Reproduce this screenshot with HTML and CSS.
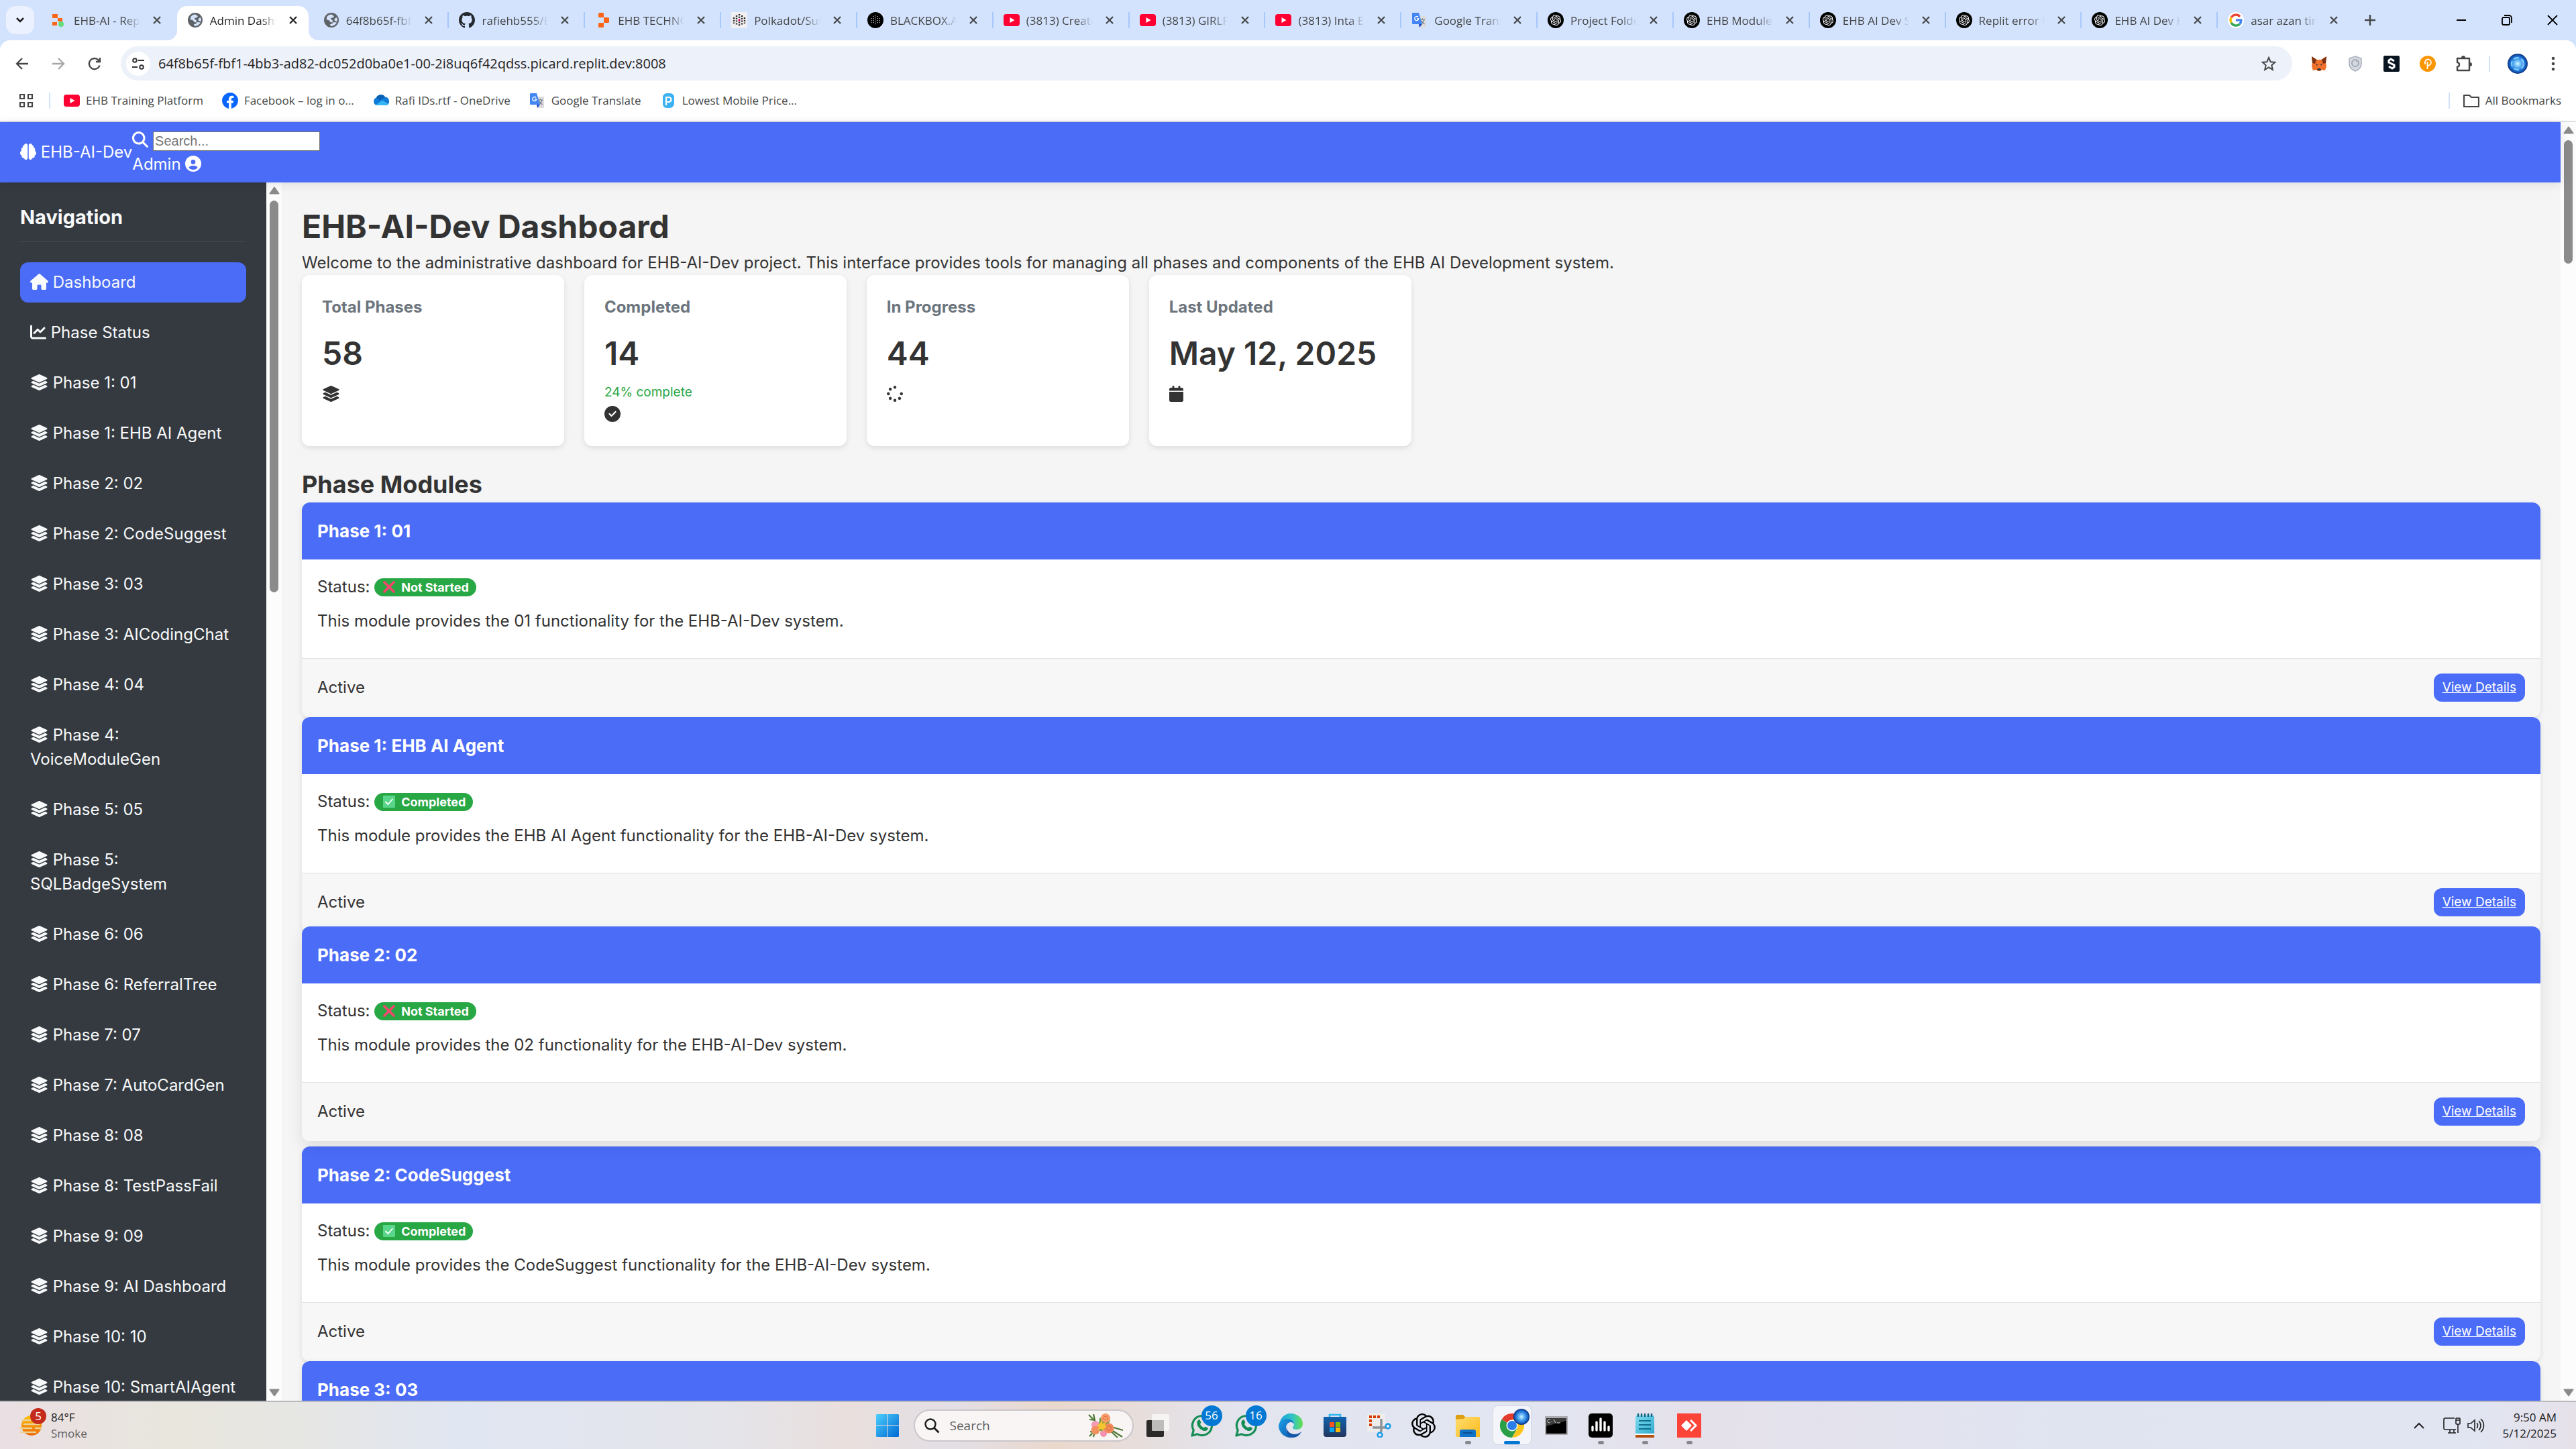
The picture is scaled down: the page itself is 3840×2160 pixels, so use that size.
FILE: index.html
```html
<!DOCTYPE html>
<html lang="en">
<head>
<meta charset="utf-8">
<title>Admin Dashboard - EHB-AI-Dev</title>
<link rel="stylesheet" href="styles.css">
</head>
<body>
<svg class="sprite" aria-hidden="true">
  <defs>
    <linearGradient id="g-win" x1="0" y1="0" x2="1" y2="1"><stop offset="0" stop-color="#4cd0fb"/><stop offset="1" stop-color="#0067d3"/></linearGradient>
    <linearGradient id="g-sun" x1="0" y1="0" x2="0" y2="1"><stop offset="0" stop-color="#fbc60a"/><stop offset="1" stop-color="#ee6203"/></linearGradient>
    <linearGradient id="g-edge" x1="0" y1="0" x2="1" y2="0"><stop offset="0" stop-color="#1a9fe0"/><stop offset=".6" stop-color="#35c6c0"/><stop offset="1" stop-color="#66e04a"/></linearGradient>
    <linearGradient id="g-edge2" x1="0" y1="0" x2="1" y2="1"><stop offset="0" stop-color="#1ba0e8"/><stop offset="1" stop-color="#0d55a8"/></linearGradient>
    <linearGradient id="g-store" x1="0" y1="0" x2="0" y2="1"><stop offset="0" stop-color="#0f62b0"/><stop offset="1" stop-color="#22355e"/></linearGradient>
    <linearGradient id="g-folder" x1="0" y1="0" x2="1" y2="1"><stop offset="0" stop-color="#ffdd70"/><stop offset="1" stop-color="#fbba1b"/></linearGradient>
    <linearGradient id="g-note" x1="0" y1="0" x2="1" y2="1"><stop offset="0" stop-color="#7fdcf0"/><stop offset="1" stop-color="#2fa9cc"/></linearGradient>
    <radialGradient id="g-orb"><stop offset="0" stop-color="#d8f8ff"/><stop offset=".35" stop-color="#5fb4f5"/><stop offset=".75" stop-color="#1a6bd0"/><stop offset="1" stop-color="#0a2f78"/></radialGradient>
  </defs>
  <symbol id="i-layers" viewBox="-32 0 576 512"><path d="M12.41 148.02l232.94 105.67c6.8 3.09 14.49 3.09 21.29 0l232.94-105.67c16.55-7.51 16.55-32.52 0-40.03L266.65 2.31a25.607 25.607 0 0 0-21.29 0L12.41 107.98c-16.55 7.51-16.55 32.53 0 40.04zm487.18 88.28l-58.09-26.33-161.64 73.27c-7.56 3.43-15.59 5.17-23.86 5.17s-16.29-1.74-23.86-5.17L70.51 209.97l-58.1 26.33c-16.55 7.5-16.55 32.5 0 40l232.94 105.59c6.8 3.08 14.49 3.08 21.29 0L499.59 276.3c16.55-7.5 16.55-32.5 0-40zm0 127.8l-57.87-26.23-161.86 73.37c-7.56 3.43-15.59 5.17-23.86 5.17s-16.29-1.74-23.86-5.17L70.29 337.87 12.41 364.1c-16.55 7.5-16.55 32.5 0 40l232.94 105.59c6.8 3.08 14.49 3.08 21.29 0L499.59 404.1c16.55-7.5 16.55-32.5 0-40z"/></symbol>
  <symbol id="i-house" viewBox="0 0 576 512"><path d="M575.8 255.5c0 18-15 32.1-32 32.1h-32l.7 160.2c0 2.7-.2 5.4-.5 8.1V472c0 22.1-17.9 40-40 40H456c-1.1 0-2.2 0-3.3-.1c-1.4 .1-2.8 .1-4.2 .1H416 392c-22.1 0-40-17.9-40-40V448 384c0-17.7-14.3-32-32-32H256c-17.7 0-32 14.3-32 32v64 24c0 22.1-17.9 40-40 40H160 128.1c-1.5 0-3-.1-4.5-.2c-1.2 .1-2.4 .2-3.6 .2H104c-22.1 0-40-17.9-40-40V360c0-.9 0-1.9 .1-2.8V287.6H32c-18 0-32-14-32-32.1c0-9 3-17 10-24L266.4 8c7-7 15-8 22-8s15 2 21 7L564.8 231.5c8 7 12 15 11 24z"/></symbol>
  <symbol id="i-chart" viewBox="0 0 512 512"><path d="M64 64c0-17.7-14.3-32-32-32S0 46.3 0 64V400c0 44.2 35.8 80 80 80H480c17.7 0 32-14.3 32-32s-14.3-32-32-32H80c-8.8 0-16-7.2-16-16V64zm406.6 86.6c12.5-12.5 12.5-32.8 0-45.3s-32.8-12.5-45.3 0L320 210.7l-57.4-57.4c-12.5-12.5-32.8-12.5-45.3 0l-112 112c-12.5 12.5-12.5 32.8 0 45.3s32.8 12.5 45.3 0L240 221.3l57.4 57.4c12.5 12.5 32.8 12.5 45.3 0l128-128z"/></symbol>
  <symbol id="i-search" viewBox="0 0 512 512"><path d="M416 208c0 45.9-14.9 88.3-40 122.7L502.6 457.4c12.5 12.5 12.5 32.8 0 45.3s-32.8 12.5-45.3 0L330.7 376c-34.4 25.2-76.8 40-122.7 40C93.1 416 0 322.9 0 208S93.1 0 208 0S416 93.1 416 208zM208 352a144 144 0 1 0 0-288 144 144 0 1 0 0 288z"/></symbol>
  <symbol id="i-user" viewBox="0 0 512 512"><path d="M399 384.2C376.9 345.8 335.4 320 288 320H224c-47.4 0-88.9 25.8-111 64.2c35.2 39.2 86.2 63.8 143 63.8s107.8-24.7 143-63.8zM0 256a256 256 0 1 1 512 0A256 256 0 1 1 0 256zm256 16a72 72 0 1 0 0-144 72 72 0 1 0 0 144z"/></symbol>
  <symbol id="i-brain" viewBox="0 0 512 512"><path d="M184 0c30.900 0 56 25.100 56 56V456c0 30.900-25.100 56-56 56c-28.900 0-52.700-21.900-55.700-50.100c-5.200 1.400-10.700 2.100-16.300 2.100c-35.300 0-64-28.700-64-64c0-7.400 1.300-14.600 3.600-21.200C21.400 367.400 0 338.200 0 304c0-31.900 18.700-59.500 45.800-72.300C37.100 220.800 32 207 32 192c0-30.700 21.600-56.300 50.400-62.600C80.800 123.900 80 118 80 112c0-29.900 20.600-55.100 48.300-62.100C131.300 21.900 155.100 0 184 0zM328 0c28.900 0 52.600 21.900 55.700 49.900C411.500 56.900 432 82 432 112c0 6-.8 11.900-2.400 17.400C458.400 135.700 480 161.200 480 192c0 15-5.100 28.800-13.800 39.700C493.300 244.500 512 272.100 512 304c0 34.200-21.400 63.400-51.600 74.800C462.700 385.400 464 392.600 464 400c0 35.300-28.700 64-64 64c-5.600 0-11.100-.7-16.300-2.100C380.700 490.100 356.900 512 328 512c-30.900 0-56-25.100-56-56V56c0-30.900 25.100-56 56-56z"/></symbol>
  <symbol id="i-check" viewBox="0 0 512 512"><path d="M256 512A256 256 0 1 0 256 0a256 256 0 1 0 0 512zM369 209L241 337c-9.400 9.400-24.600 9.400-33.900 0l-64-64c-9.400-9.400-9.400-24.600 0-33.900s24.600-9.400 33.900 0l47 47L335 175c9.400-9.400 24.600-9.400 33.900 0s9.400 24.600 0 33.900z"/></symbol>
  <symbol id="i-spinner" viewBox="0 0 512 512"><path d="M304 48a48 48 0 1 0 -96 0 48 48 0 1 0 96 0zm0 416a48 48 0 1 0 -96 0 48 48 0 1 0 96 0zM48 304a48 48 0 1 0 0-96 48 48 0 1 0 0 96zm464-48a48 48 0 1 0 -96 0 48 48 0 1 0 96 0zM142.900 437A48 48 0 1 0 75 369.100 48 48 0 1 0 142.900 437zm0-294.200A48 48 0 1 0 75 75a48 48 0 1 0 67.900 67.900zM369.100 437A48 48 0 1 0 437 369.100 48 48 0 1 0 369.100 437z"/></symbol>
  <symbol id="i-calendar" viewBox="0 0 448 512"><path d="M96 32V64H48C21.500 64 0 85.500 0 112v48H448V112c0-26.500-21.500-48-48-48H352V32c0-17.700-14.300-32-32-32s-32 14.300-32 32V64H160V32c0-17.700-14.300-32-32-32S96 14.300 96 32zM448 192H0V464c0 26.500 21.500 48 48 48H400c26.500 0 48-21.500 48-48V192z"/></symbol>
  <symbol id="i-cross" viewBox="0 0 18 18"><path d="M2 2l14 14M16 2L2 16" stroke="#f8466f" stroke-width="3.600" stroke-linecap="round"/></symbol>
  <symbol id="i-tick" viewBox="0 0 18 18"><rect width="18" height="18" rx="1" fill="#5ad68b"/><path d="M4 9.500l3.500 3.500L14 5.500" fill="none" stroke="#fff" stroke-width="1.800" stroke-linecap="round"/></symbol>
  <symbol id="i-close" viewBox="0 0 14 14"><path d="M2 2l10 10M12 2L2 12" stroke="currentColor" stroke-width="2.200"/></symbol>
  <symbol id="i-globe" viewBox="0 0 24 24"><circle cx="12" cy="12" r="11" fill="#5f6368"/><path d="M12 3.500c-3 0-5 1.500-6.500 3.500l-1 4 4.500 1.500 1.500 2.500 3 .5.500-3-3-2 .5-2h3l1.500-2.500zM20 8l-3 1.500-.5 3 3 1.500 1.300-.5c.3-2 0-4-.8-5.500zM11 21c4 0 7.500-2.500 9-5.500l-5-.5-2 2.500-3 .5z" fill="#d4e2fc"/></symbol>
  <symbol id="i-replit" viewBox="0 0 24 24"><path d="M5 2.500a1.500 1.500 0 0 1 1.500-1.500h5A1.500 1.500 0 0 1 13 2.500V8H6.500A1.500 1.500 0 0 1 5 6.500zM13 8h6.500A1.500 1.500 0 0 1 21 9.500v5a1.500 1.500 0 0 1-1.500 1.500H13zM5 17.500A1.500 1.500 0 0 1 6.500 16H13v5.500a1.500 1.500 0 0 1-1.500 1.500h-5A1.500 1.500 0 0 1 5 21.500z" fill="#fb6515"/></symbol>
  <symbol id="i-replit-on" viewBox="0 0 24 24"><path d="M2 3h8v6H2zM10 9h7v5h-7zM2 15h7v5H2z" fill="#fb6515"/><circle cx="15" cy="18" r="4" fill="#62dc7c"/></symbol>
  <symbol id="i-github" viewBox="0 0 16 16"><path fill="#24292f" d="M8 0C3.580 0 0 3.580 0 8c0 3.540 2.290 6.530 5.470 7.590.4.070.55-.17.55-.38 0-.19-.01-.82-.01-1.490-2.010.37-2.530-.49-2.690-.94-.09-.23-.48-.94-.82-1.130-.28-.15-.68-.52-.01-.53.63-.01 1.080.58 1.230.82.72 1.210 1.870.87 2.330.66.07-.52.28-.87.51-1.070-1.780-.2-3.640-.89-3.640-3.950 0-.87.31-1.590.82-2.150-.08-.2-.36-1.020.08-2.120 0 0 .67-.21 2.200.82.64-.18 1.320-.27 2-.27s1.360.09 2 .27c1.530-1.040 2.200-.82 2.200-.82.44 1.100.16 1.920.08 2.120.51.56.82 1.270.82 2.150 0 3.070-1.870 3.750-3.650 3.950.29.25.54.73.54 1.480 0 1.070-.01 1.930-.01 2.200 0 .21.15.46.55.38A8.010 8.010 0 0 0 16 8c0-4.420-3.580-8-8-8z"/></symbol>
  <symbol id="i-polka" viewBox="0 0 24 24"><rect width="24" height="24" fill="#f1efef"/><path d="M12 3v18M8 5v15M16 5v15M4 8v9M20 8v9" stroke="#222" stroke-width="2.400" stroke-dasharray="2 1.800"/><circle cx="12" cy="12" r="1.500" fill="#e6007a"/></symbol>
  <symbol id="i-blackbox" viewBox="0 0 24 24"><circle cx="12" cy="12" r="12"/><path d="M12 5v14M9 6v12M15 6v12M6 9v7M18 9v7" stroke="#bbb" stroke-width="1.300" stroke-dasharray="1.300 1.700"/></symbol>
  <symbol id="i-youtube" viewBox="0 0 24 24"><rect y="3" width="24" height="18" rx="4" fill="#ff0033"/><path d="M9.500 8l7 4-7 4z" fill="#fff"/></symbol>
  <symbol id="i-translate" viewBox="0 0 24 24"><path d="M9 6h12a1 1 0 0 1 1 1v15a1 1 0 0 1-1 1h-8z" fill="#dcdcdc"/><path d="M13 11h7M16.500 9.500V11M19 11c0 3-3 6-5 7M15 13c1 2 3 4 4.500 5" stroke="#6b7785" stroke-width="1.200" fill="none"/><path d="M2 1h9l5 17H2a1 1 0 0 1-1-1V2a1 1 0 0 1 1-1z" fill="#4285f4"/><path d="M11 18h5l-4 5z" fill="#2146c4"/><path d="M10 7.500a3 3 0 1 0 .8 2.500H8" stroke="#fff" stroke-width="1.400" fill="none"/></symbol>
  <symbol id="i-knot" viewBox="0 0 24 24"><path d="M22.282 9.821a5.985 5.985 0 0 0-.516-4.911 6.046 6.046 0 0 0-6.510-2.900A6.065 6.065 0 0 0 4.981 4.182a5.985 5.985 0 0 0-3.998 2.900 6.046 6.046 0 0 0 .743 7.097 5.980 5.980 0 0 0 .511 4.911 6.051 6.051 0 0 0 6.515 2.900A5.985 5.985 0 0 0 13.260 24a6.056 6.056 0 0 0 5.772-4.206 5.989 5.989 0 0 0 3.998-2.900 6.056 6.056 0 0 0-.748-7.073zm-9.022 12.608a4.476 4.476 0 0 1-2.876-1.041l.142-.080 4.778-2.758a.795.795 0 0 0 .393-.681v-6.737l2.020 1.169a.071.071 0 0 1 .038.062v5.583a4.504 4.504 0 0 1-4.495 4.485zm-9.661-4.125a4.471 4.471 0 0 1-.535-3.014l.142.085 4.783 2.758a.771.771 0 0 0 .781 0l5.843-3.369v2.332a.080.080 0 0 1-.033.062L9.740 19.950a4.499 4.499 0 0 1-6.141-1.646zM2.341 7.896a4.485 4.485 0 0 1 2.366-1.973V11.600a.766.766 0 0 0 .388.677l5.814 3.354-2.020 1.169a.076.076 0 0 1-.071 0l-4.830-2.787A4.504 4.504 0 0 1 2.341 7.872zm16.596 3.856L13.104 8.364 15.119 7.200a.076.076 0 0 1 .071 0l4.830 2.791a4.494 4.494 0 0 1-.677 8.104v-5.677a.790.790 0 0 0-.407-.667zm2.011-3.023l-.142-.085-4.774-2.782a.776.776 0 0 0-.785 0L9.409 9.230V6.897a.066.066 0 0 1 .028-.062l4.830-2.787a4.499 4.499 0 0 1 6.680 4.660zM8.307 12.863l-2.020-1.164a.080.080 0 0 1-.038-.057V6.074a4.499 4.499 0 0 1 7.376-3.454l-.142.081L8.704 5.459a.795.795 0 0 0-.393.681zm1.097-2.365l2.602-1.500 2.607 1.500v2.999l-2.597 1.500-2.607-1.500z"/></symbol>
  <symbol id="i-gpt" viewBox="0 0 24 24"><circle cx="12" cy="12" r="12"/><use href="#i-knot" x="4" y="4" width="16" height="16" fill="#fff"/></symbol>
  <symbol id="i-google" viewBox="0 0 24 24"><circle cx="12" cy="12" r="12" fill="#fff"/><path d="M18 6.800A8 8 0 0 0 5 8.200" fill="none" stroke="#ea4335" stroke-width="3.400"/><path d="M5 8.200a8 8 0 0 0 0 7.600" fill="none" stroke="#fbbc05" stroke-width="3.400"/><path d="M5 15.800a8 8 0 0 0 12.500 2.200" fill="none" stroke="#34a853" stroke-width="3.400"/><path d="M17.500 18a8 8 0 0 0 2.300-6H12" fill="none" stroke="#4285f4" stroke-width="3.400"/></symbol>
  <symbol id="i-facebook" viewBox="0 0 24 24"><path fill="#0866ff" d="M24 12a12 12 0 1 0-13.900 11.900v-8.400H7.100V12h3V9.400c0-3 1.800-4.700 4.500-4.700 1.300 0 2.700.2 2.700.2v3h-1.500c-1.500 0-2 .9-2 1.900V12h3.300l-.5 3.500h-2.800v8.400A12 12 0 0 0 24 12z"/></symbol>
  <symbol id="i-onedrive" viewBox="0 0 24 24"><path d="M6 19a6 6 0 0 1-1-11.500 7.500 7.500 0 0 1 13-1A6.500 6.500 0 0 1 20 19z" fill="#0f7ad8"/><path d="M5 7.500a7.500 7.500 0 0 1 13-1l-8 5z" fill="#0a5fb4"/><path d="M4 18.500l10-7 9 5.500c-1 1.500-2 2-4 2H7c-1.300 0-2.200-.1-3-.5z" fill="#38b6f4"/></symbol>
  <symbol id="i-price" viewBox="0 0 24 24"><path d="M10 1h5a6 6 0 0 1 6 6v9a7 7 0 0 1-7 7h-4a6 6 0 0 1-6-6V7a6 6 0 0 1 6-6z" fill="#3cb2f2"/><path d="M9 19V7h4a3.500 3.500 0 0 1 0 7H9" fill="none" stroke="#fff" stroke-width="2.200"/></symbol>
  <symbol id="i-whatsapp" viewBox="0 0 36 36"><path d="M3 33l2.200-8A14.500 14.500 0 1 1 11 30.800z" fill="none" stroke="#178d56" stroke-width="3.200" stroke-linejoin="round"/><path d="M12 10c1-1 2.500-1 3 .3l1.300 3c.3.900-1.300 2-1.200 2.700 1 2.300 3 4.200 5.300 5 .8.200 1.700-1.700 2.700-1.300l3 1.500c1 .5.800 2 0 3-1.600 1.900-4.200 2.200-7 1.200-4-1.500-7-4.700-8.300-8.400-.9-2.800-.5-5.300 1.200-7z" fill="#178d56"/></symbol>
  <symbol id="i-up" viewBox="0 0 16 12"><path d="M8 1.500L14.500 10.500h-13z" fill="#8b8b8b" stroke="#8b8b8b" stroke-width="2" stroke-linejoin="round"/></symbol>
</svg>

<header class="browser">
  <div class="tabstrip">
    <button class="tab-search" aria-label="Search tabs"><svg width="14" height="10" viewBox="0 0 14 10"><path d="M2 2l5 5 5-5" fill="none" stroke="#1f1f1f" stroke-width="2.500"/></svg></button>
    <nav class="tabs" aria-label="Open tabs">
      <div class="tab plain"><svg class="fav"><use href="#i-replit-on"/></svg><span class="tab-title">EHB-AI - Replit</span><button class="x" aria-label="Close"><svg><use href="#i-close"/></svg></button></div>
      <div class="tab active"><svg class="fav"><use href="#i-globe"/></svg><span class="tab-title">Admin Dashboard</span><button class="x" aria-label="Close"><svg><use href="#i-close"/></svg></button></div>
      <div class="tab plain"><svg class="fav"><use href="#i-globe"/></svg><span class="tab-title">64f8b65f-fbf1-4bb3</span><button class="x" aria-label="Close"><svg><use href="#i-close"/></svg></button></div>
      <div class="tab"><svg class="fav"><use href="#i-github"/></svg><span class="tab-title">rafiehb555/EHB</span><button class="x" aria-label="Close"><svg><use href="#i-close"/></svg></button></div>
      <div class="tab"><svg class="fav"><use href="#i-replit"/></svg><span class="tab-title">EHB TECHNOLOGIES</span><button class="x" aria-label="Close"><svg><use href="#i-close"/></svg></button></div>
      <div class="tab"><svg class="fav"><use href="#i-polka"/></svg><span class="tab-title">Polkadot/Substrate</span><button class="x" aria-label="Close"><svg><use href="#i-close"/></svg></button></div>
      <div class="tab"><svg class="fav"><use href="#i-blackbox"/></svg><span class="tab-title">BLACKBOX.AI</span><button class="x" aria-label="Close"><svg><use href="#i-close"/></svg></button></div>
      <div class="tab"><svg class="fav"><use href="#i-youtube"/></svg><span class="tab-title">(3813) Create</span><button class="x" aria-label="Close"><svg><use href="#i-close"/></svg></button></div>
      <div class="tab"><svg class="fav"><use href="#i-youtube"/></svg><span class="tab-title">(3813) GIRLFR</span><button class="x" aria-label="Close"><svg><use href="#i-close"/></svg></button></div>
      <div class="tab"><svg class="fav"><use href="#i-youtube"/></svg><span class="tab-title">(3813) Inta Ek</span><button class="x" aria-label="Close"><svg><use href="#i-close"/></svg></button></div>
      <div class="tab"><svg class="fav"><use href="#i-translate"/></svg><span class="tab-title">Google Translate</span><button class="x" aria-label="Close"><svg><use href="#i-close"/></svg></button></div>
      <div class="tab"><svg class="fav"><use href="#i-gpt"/></svg><span class="tab-title">Project Folder</span><button class="x" aria-label="Close"><svg><use href="#i-close"/></svg></button></div>
      <div class="tab"><svg class="fav"><use href="#i-gpt"/></svg><span class="tab-title">EHB Modules</span><button class="x" aria-label="Close"><svg><use href="#i-close"/></svg></button></div>
      <div class="tab"><svg class="fav"><use href="#i-gpt"/></svg><span class="tab-title">EHB AI Dev S</span><button class="x" aria-label="Close"><svg><use href="#i-close"/></svg></button></div>
      <div class="tab"><svg class="fav"><use href="#i-gpt"/></svg><span class="tab-title">Replit error f</span><button class="x" aria-label="Close"><svg><use href="#i-close"/></svg></button></div>
      <div class="tab"><svg class="fav"><use href="#i-gpt"/></svg><span class="tab-title">EHB AI Dev H</span><button class="x" aria-label="Close"><svg><use href="#i-close"/></svg></button></div>
      <div class="tab"><svg class="fav"><use href="#i-google"/></svg><span class="tab-title">asar azan time</span><button class="x" aria-label="Close"><svg><use href="#i-close"/></svg></button></div>
    </nav>
    <button class="new-tab" aria-label="New tab"><svg width="18" height="18" viewBox="0 0 18 18"><path d="M9 1v16M1 9h16" stroke="#444746" stroke-width="2.400"/></svg></button>
    <div class="window-controls">
      <button aria-label="Minimize"><svg width="16" height="16" viewBox="0 0 16 16"><path d="M1 8h14" stroke="#000" stroke-width="2"/></svg></button>
      <button aria-label="Restore"><svg width="16" height="16" viewBox="0 0 16 16"><rect x="1" y="4" width="11" height="11" rx="2" fill="none" stroke="#000" stroke-width="1.800"/><path d="M4 1h7a4 4 0 0 1 4 4v7" fill="none" stroke="#000" stroke-width="1.800"/></svg></button>
      <button aria-label="Close window"><svg width="16" height="16" viewBox="0 0 16 16"><path d="M1 1l14 14M15 1L1 15" stroke="#000" stroke-width="1.800"/></svg></button>
    </div>
  </div>
  <div class="toolbar">
    <button class="tool" aria-label="Back"><svg width="20" height="20" viewBox="0 0 20 20"><path d="M19 10H2M10 2l-8 8 8 8" fill="none" stroke="#444746" stroke-width="2.300"/></svg></button>
    <button class="tool" aria-label="Forward"><svg width="20" height="20" viewBox="0 0 20 20"><path d="M1 10h17M10 2l8 8-8 8" fill="none" stroke="#a5a7a8" stroke-width="2.300"/></svg></button>
    <button class="tool" aria-label="Reload"><svg width="20" height="20" viewBox="0 0 20 20"><path d="M17.500 12.500A8 8 0 1 1 16.500 5.500M18 1v6h-6" fill="none" stroke="#444746" stroke-width="2.300"/></svg></button>
    <div class="omnibox">
      <span class="site-info"><svg width="20" height="20" viewBox="0 0 20 20" fill="none" stroke="#303236" stroke-width="2"><circle cx="5" cy="5" r="2.800"/><path d="M10 5h9M1 15h8"/><circle cx="15" cy="15" r="2.800"/></svg></span>
      <input class="url" type="text" aria-label="Address" value="64f8b65f-fbf1-4bb3-ad82-dc052d0ba0e1-00-2i8uq6f42qdss.picard.replit.dev:8008">
      <button class="icon-btn" aria-label="Bookmark this tab"><svg width="24" height="24" viewBox="0 0 24 24"><path d="M12 3l2.700 6.200 6.600.6-5 4.500 1.500 6.600L12 17.400l-5.800 3.500 1.500-6.600-5-4.500 6.600-.6z" fill="none" stroke="#444746" stroke-width="2"/></svg></button>
    </div>
    <div class="extensions">
      <button class="icon-btn" aria-label="Wallet"><svg width="24" height="24" viewBox="0 0 24 24"><path d="M1 1l8 5h6l8-5-1 9 1 6-2 6-5-1-2 2h-4l-2-2-5 1-2-6 1-6z" fill="#f0702c"/><path d="M1 1l7 5-2 6-4-1zM23 1l-7 5 2 6 4-1z" fill="#7a3115"/><path d="M7 12l3 1-1 2zM17 12l-3 1 1 2zM10 19h4l1 2-2 1h-2l-2-1z" fill="#23344a"/></svg></button>
      <button class="icon-btn" aria-label="Shield"><svg width="24" height="24" viewBox="0 0 24 24"><path d="M12 1l9 3v8c0 5-4 9-9 11-5-2-9-6-9-11V4z" fill="#d5d9e0" stroke="#aab1bd" stroke-width="1.500"/><circle cx="12" cy="11" r="5" fill="none" stroke="#a2aab8" stroke-width="2"/><path d="M13 9l3-2" stroke="#a2aab8" stroke-width="2"/></svg></button>
      <button class="icon-btn" aria-label="S extension"><svg width="24" height="24" viewBox="0 0 24 24"><rect width="24" height="24" rx="2" fill="#081520"/><path d="M16 8l-5-3-3 2v3l8 4v3l-3 2-5-3" fill="none" stroke="#fff" stroke-width="3"/></svg></button>
      <button class="icon-btn" aria-label="P extension"><svg width="24" height="24" viewBox="0 0 24 24"><circle cx="12" cy="12" r="12" fill="#fb9500"/><path d="M8 13V9a4.500 4.500 0 1 1 4 5.500M11.500 9v11" fill="none" stroke="#fff" stroke-width="1.800"/></svg></button>
      <button class="icon-btn" aria-label="Extensions"><svg width="24" height="24" viewBox="0 0 24 24"><path d="M2 4h18v18H2v-5.500c4 0 4-6.500 0-6.500z" fill="none" stroke="#444746" stroke-width="2.400" stroke-linejoin="round"/><path d="M8 3a3 3 0 0 1 6 0zM21 10a3 3 0 0 1 0 6z" fill="#444746"/></svg></button>
    </div>
    <span class="divider"></span>
    <button class="icon-btn profile" aria-label="Profile"><svg width="30" height="30" viewBox="0 0 30 30"><circle cx="15" cy="15" r="15" fill="url(#g-orb)"/><circle cx="15" cy="15" r="9" fill="none" stroke="#7fd0ff" stroke-width="2" stroke-dasharray="8 4"/></svg></button>
    <button class="icon-btn" aria-label="Menu"><svg width="24" height="24" viewBox="0 0 24 24" fill="#444746"><circle cx="12" cy="4" r="2.300"/><circle cx="12" cy="12" r="2.300"/><circle cx="12" cy="20" r="2.300"/></svg></button>
  </div>
  <nav class="bookmarks" aria-label="Bookmarks">
    <button class="icon-btn apps" aria-label="Apps"><svg width="22" height="22" viewBox="0 0 22 22" fill="none" stroke="#444746" stroke-width="2.200"><path d="M2 2h6v6H2zM14 2h6v6h-6zM2 14h6v6H2zM14 14h6v6h-6z"/></svg></button>
    <span class="divider"></span>
    <a href="#"><svg><use href="#i-youtube"/></svg>EHB Training Platform</a>
    <a href="#"><svg><use href="#i-facebook"/></svg>Facebook – log in o...</a>
    <a href="#"><svg><use href="#i-onedrive"/></svg>Rafi IDs.rtf - OneDrive</a>
    <a href="#"><svg><use href="#i-translate"/></svg>Google Translate</a>
    <a href="#"><svg><use href="#i-price"/></svg>Lowest Mobile Price...</a>
    <span class="spacer"></span>
    <span class="divider"></span>
    <a href="#"><svg viewBox="0 0 24 24"><path d="M1 4h8l3 3h11v14H1z" fill="none" stroke="#444746" stroke-width="2.200" stroke-linejoin="round"/></svg>All Bookmarks</a>
  </nav>
</header>

<div class="viewport">
  <div class="page">
    <header class="app-header">
      <a class="brand" href="#"><svg class="fa"><use href="#i-brain"/></svg> EHB-AI-Dev</a>
      <div class="header-tools">
        <div><label for="q"><svg class="fa"><use href="#i-search"/></svg></label> <input id="q" class="search" type="text" placeholder="Search..."></div>
        <div>Admin <svg class="fa"><use href="#i-user"/></svg></div>
      </div>
    </header>
    <div class="app-body">
      <aside class="sidebar">
        <h3>Navigation</h3>
        <ul>
          <li><a class="current" href="#"><svg class="fa wide"><use href="#i-house"/></svg> Dashboard</a></li>
          <li><a href="#"><svg class="fa"><use href="#i-chart"/></svg> Phase Status</a></li>
          <li><a href="#"><svg class="fa wide"><use href="#i-layers"/></svg> Phase 1: 01</a></li>
          <li><a href="#"><svg class="fa wide"><use href="#i-layers"/></svg> Phase 1: EHB AI Agent</a></li>
          <li><a href="#"><svg class="fa wide"><use href="#i-layers"/></svg> Phase 2: 02</a></li>
          <li><a href="#"><svg class="fa wide"><use href="#i-layers"/></svg> Phase 2: CodeSuggest</a></li>
          <li><a href="#"><svg class="fa wide"><use href="#i-layers"/></svg> Phase 3: 03</a></li>
          <li><a href="#"><svg class="fa wide"><use href="#i-layers"/></svg> Phase 3: AICodingChat</a></li>
          <li><a href="#"><svg class="fa wide"><use href="#i-layers"/></svg> Phase 4: 04</a></li>
          <li><a href="#"><svg class="fa wide"><use href="#i-layers"/></svg> Phase 4: VoiceModuleGen</a></li>
          <li><a href="#"><svg class="fa wide"><use href="#i-layers"/></svg> Phase 5: 05</a></li>
          <li><a href="#"><svg class="fa wide"><use href="#i-layers"/></svg> Phase 5: SQLBadgeSystem</a></li>
          <li><a href="#"><svg class="fa wide"><use href="#i-layers"/></svg> Phase 6: 06</a></li>
          <li><a href="#"><svg class="fa wide"><use href="#i-layers"/></svg> Phase 6: ReferralTree</a></li>
          <li><a href="#"><svg class="fa wide"><use href="#i-layers"/></svg> Phase 7: 07</a></li>
          <li><a href="#"><svg class="fa wide"><use href="#i-layers"/></svg> Phase 7: AutoCardGen</a></li>
          <li><a href="#"><svg class="fa wide"><use href="#i-layers"/></svg> Phase 8: 08</a></li>
          <li><a href="#"><svg class="fa wide"><use href="#i-layers"/></svg> Phase 8: TestPassFail</a></li>
          <li><a href="#"><svg class="fa wide"><use href="#i-layers"/></svg> Phase 9: 09</a></li>
          <li><a href="#"><svg class="fa wide"><use href="#i-layers"/></svg> Phase 9: AI Dashboard</a></li>
          <li><a href="#"><svg class="fa wide"><use href="#i-layers"/></svg> Phase 10: 10</a></li>
          <li><a href="#"><svg class="fa wide"><use href="#i-layers"/></svg> Phase 10: SmartAIAgent</a></li>
        </ul>
      </aside>
      <div class="scrollbar"><svg><use href="#i-up"/></svg><div class="track"><div class="thumb side"></div></div><svg class="down"><use href="#i-up"/></svg></div>
      <main class="content">
        <h1>EHB-AI-Dev Dashboard</h1>
        <p>Welcome to the administrative dashboard for EHB-AI-Dev project. This interface provides tools for managing all phases and components of the EHB AI Development system.</p>
        <section class="stats">
          <article class="stat"><h3>Total Phases</h3><div class="value">58</div><svg class="fa wide"><use href="#i-layers"/></svg></article>
          <article class="stat"><h3>Completed</h3><div class="value">14</div><div class="trend">24% complete</div><svg class="fa"><use href="#i-check"/></svg></article>
          <article class="stat"><h3>In Progress</h3><div class="value">44</div><svg class="fa"><use href="#i-spinner"/></svg></article>
          <article class="stat"><h3>Last Updated</h3><div class="value">May 12, 2025</div><svg class="fa narrow"><use href="#i-calendar"/></svg></article>
        </section>
        <h2>Phase Modules</h2>
        <section class="modules">
          <article class="module">
            <h3>Phase 1: 01</h3>
            <div class="module-body"><p>Status: <span class="badge"><svg><use href="#i-cross"/></svg>Not Started</span></p><p>This module provides the 01 functionality for the EHB-AI-Dev system.</p></div>
            <footer><span>Active</span><a class="btn" href="#">View Details</a></footer>
          </article>
          <article class="module">
            <h3>Phase 1: EHB AI Agent</h3>
            <div class="module-body"><p>Status: <span class="badge"><svg><use href="#i-tick"/></svg>Completed</span></p><p>This module provides the EHB AI Agent functionality for the EHB-AI-Dev system.</p></div>
            <footer><span>Active</span><a class="btn" href="#">View Details</a></footer>
          </article>
          <article class="module raised">
            <h3>Phase 2: 02</h3>
            <div class="module-body"><p>Status: <span class="badge"><svg><use href="#i-cross"/></svg>Not Started</span></p><p>This module provides the 02 functionality for the EHB-AI-Dev system.</p></div>
            <footer><span>Active</span><a class="btn" href="#">View Details</a></footer>
          </article>
          <article class="module">
            <h3>Phase 2: CodeSuggest</h3>
            <div class="module-body"><p>Status: <span class="badge"><svg><use href="#i-tick"/></svg>Completed</span></p><p>This module provides the CodeSuggest functionality for the EHB-AI-Dev system.</p></div>
            <footer><span>Active</span><a class="btn" href="#">View Details</a></footer>
          </article>
          <article class="module">
            <h3>Phase 3: 03</h3>
          </article>
        </section>
      </main>
    </div>
  </div>
  <div class="scrollbar"><svg><use href="#i-up"/></svg><div class="track"><div class="thumb main"></div></div><svg class="down"><use href="#i-up"/></svg></div>
</div>

<footer class="taskbar">
  <button class="weather">
    <span class="task-icon"><svg width="33" height="36" viewBox="0 0 33 36"><circle cx="18" cy="18" r="15" fill="url(#g-sun)"/><path d="M4 10h12M7 16h22M0 22h18M24 22h9M2 28h22" stroke="#ecd29a" stroke-width="2.600" stroke-linecap="round"/></svg><span class="count alert">5</span></span>
    <span class="weather-text"><span>84°F</span><span class="muted">Smoke</span></span>
  </button>
  <div class="task-apps">
    <button class="app" aria-label="Start"><svg width="36" height="36" viewBox="0 0 36 36"><path d="M2 1h15v16H1V2zM18 1h16l1 1v15H18zM1 18h16v17H2l-1-1zM18 18h17v16l-1 1H18z" fill="url(#g-win)"/></svg></button>
    <div class="task-search">
      <svg width="24" height="24" viewBox="0 0 24 24"><circle cx="10" cy="10" r="7.500" fill="none" stroke="#1b1b1b" stroke-width="2.400"/><path d="M15.500 15.500l7 7" stroke="#1b1b1b" stroke-width="2.800"/></svg>
      <input type="text" aria-label="Search" placeholder="Search">
      <svg width="54" height="38" viewBox="0 0 54 38"><path d="M2 3l14 14M3 10l9 1M9 2l2 9M3 35l11-11M4 28l8 2M9 36l2-8M30 22l22 14M32 20l21 6M31 24l14 13" stroke="#4d7a35" stroke-width="2.200"/><path d="M18 8l8-4 8 6-6 20-12-4z" fill="#6d9a4a"/><circle cx="12" cy="18" r="6" fill="#f59bb8"/><circle cx="24" cy="31" r="5" fill="#f48fb0"/><circle cx="27" cy="8" r="7" fill="#f79a68"/><circle cx="12" cy="26" r="6.500" fill="#f3905f"/><circle cx="32" cy="23" r="7.500" fill="#f28b5c"/><path d="M21 11l2 5 5-2-2 5 4 3-5 1-1 5-3-4-5 2 1-5-4-3 5-1z" fill="#f4c52e"/><circle cx="32" cy="23" r="3.500" fill="none" stroke="#d8683f"/><circle cx="27" cy="8" r="3" fill="none" stroke="#df7447"/></svg>
    </div>
    <button class="app" aria-label="Task view"><svg width="36" height="36" viewBox="0 0 36 36"><rect x="1" y="10" width="26" height="25" rx="2" fill="#2b2a29"/><rect x="9" y="1" width="26" height="25" rx="2" fill="#f5f4f3"/><path d="M9 10h18v16H11l-2-2z" fill="#bdbcbb"/></svg></button>
    <button class="app" aria-label="WhatsApp"><span class="task-icon"><svg width="36" height="36"><use href="#i-whatsapp"/></svg><span class="count">56</span></span></button>
    <button class="app" aria-label="WhatsApp Business"><span class="task-icon"><svg width="36" height="36"><use href="#i-whatsapp"/></svg><span class="count">16</span></span></button>
    <button class="app" aria-label="Edge"><svg width="36" height="36" viewBox="0 0 36 36"><path d="M1 17C2 7 9 0 18 0c10 0 18 7 18 15 0 6-4 9-9 9-4 0-6-1-6-3 0-1 2-2 2-5 0-4-4-7-9-7C8 9 3 12 1 17z" fill="url(#g-edge)"/><path d="M0 18c1-6 7-10 13-10 6 0 10 4 10 8-1-2-3-3-5-3-4 0-7 4-7 9 0 7 5 12 12 13-2 1-4 1-5 1C8 36 0 28 0 18z" fill="url(#g-edge2)"/><path d="M12 20c0 7 6 11 12 11 4 0 8-2 10-4-2 5-7 9-13 9-7-2-11-9-9-16z" fill="#1656a8"/></svg></button>
    <button class="app" aria-label="Store"><svg width="36" height="36" viewBox="0 0 36 36"><path d="M10 8V2h16v6" fill="none" stroke="#2cb6f4" stroke-width="2.600"/><path d="M1 5h34v26a4 4 0 0 1-4 4H5a4 4 0 0 1-4-4z" fill="url(#g-store)"/><path d="M10 13h7v7h-7z" fill="#f35325"/><path d="M19 13h7v7h-7z" fill="#81bc06"/><path d="M10 21h7v7h-7z" fill="#05a6f0"/><path d="M19 21h7v7h-7z" fill="#ffba08"/></svg></button>
    <button class="app" aria-label="Snipping Tool"><svg width="36" height="36" viewBox="0 0 36 36"><rect x="0" y="0" width="27" height="27" rx="3" fill="#eeedec"/><path d="M5 19V5h14" fill="none" stroke="#d83b01" stroke-width="4" stroke-dasharray="4 2"/><path d="M21 8v20M8 21h20" stroke="#8f9499" stroke-width="3.500"/><circle cx="31" cy="19" r="3.500" fill="none" stroke="#1a9be8" stroke-width="2.400"/><circle cx="19" cy="32" r="3.500" fill="none" stroke="#1a9be8" stroke-width="2.400"/></svg></button>
    <button class="app" aria-label="ChatGPT"><svg width="36" height="36"><use href="#i-knot"/></svg></button>
    <button class="app running" aria-label="File Explorer"><svg width="36" height="36" viewBox="0 0 36 36"><path d="M0 4a2 2 0 0 1 2-2h9l4 4v6H0z" fill="#dd9f12"/><path d="M0 9l12-1 3-3h19a2 2 0 0 1 2 2v28H2a2 2 0 0 1-2-2z" fill="url(#g-folder)"/><path d="M6 35V27a3 3 0 0 1 3-3h18a3 3 0 0 1 3 3v8z" fill="#1173c7"/><path d="M11 29h14" stroke="#0a4d90" stroke-width="2"/></svg></button>
    <button class="app running focused" aria-label="Chrome"><span class="task-icon"><svg width="36" height="36" viewBox="0 0 36 36"><circle cx="18" cy="18" r="18" fill="#fff"/><path d="M18 18L2.400 9A18 18 0 0 1 33.600 9z" fill="#e33b2e"/><path d="M18 18L2.400 9A18 18 0 0 0 18 36l8-14z" fill="#2b9f48"/><path d="M18 18l8 4-8 14A18 18 0 0 0 33.600 9H18z" fill="#fcc61e"/><circle cx="18" cy="18" r="8.500" fill="#fff"/><circle cx="18" cy="18" r="7" fill="#2b7de9"/></svg><svg class="overlay" width="24" height="24" viewBox="0 0 24 24"><circle cx="12" cy="12" r="12" fill="url(#g-orb)"/></svg></span></button>
    <button class="app" aria-label="Command Prompt"><svg width="36" height="36" viewBox="0 0 36 36"><rect x="1" y="4" width="34" height="28" rx="1" fill="#a9abb0"/><path d="M3 7h30v23H3z"/><path d="M3 7h30v4L3 19z" fill="#3a3a3a"/><path d="M9 9.500a2.500 2.500 0 1 0 0 4M11 11v1M14 9l3 5M19 14h5" fill="none" stroke="#ddd"/></svg></button>
    <button class="app running" aria-label="Audio"><svg width="36" height="36" viewBox="0 0 36 36"><rect width="36" height="36" rx="5"/><path d="M6 20v5M12 13v12M18 8v17M24 13v12M30 20v5" stroke="#fff" stroke-width="3.400" stroke-linecap="round"/></svg></button>
    <button class="app running" aria-label="Notepad"><svg width="36" height="36" viewBox="0 0 36 36"><rect x="4" y="3" width="28" height="28" rx="2" fill="url(#g-note)"/><path d="M8 0v5M13 0v5M18 0v5M23 0v5M28 0v5" stroke="#14627f" stroke-width="2.400"/><path d="M9 11h18M9 17h18M9 23h18" stroke="#0f6f90" stroke-width="2"/><path d="M4 30h28v2H4z" fill="#fff"/><path d="M4 32h28v4H4z" fill="#b4500f"/></svg></button>
    <button class="app running" aria-label="AnyDesk"><svg width="36" height="36" viewBox="0 0 36 36"><path d="M0 0h36v36H0z" fill="#fb4338"/><path d="M14 10l8 8-8 8-8-8z" fill="#fff"/><path d="M20 10l8 8-8 8" fill="none" stroke="#fff" stroke-width="3"/></svg></button>
  </div>
  <div class="tray">
    <button class="chevron" aria-label="Hidden icons"><svg width="18" height="12" viewBox="0 0 18 12"><path d="M2 10l7-7 7 7" fill="none" stroke="#222" stroke-width="2"/></svg></button>
    <button class="network" aria-label="Network"><svg width="26" height="26" viewBox="0 0 26 26" fill="none" stroke="#222" stroke-width="1.600"><path d="M17 2H3a2 2 0 0 0-2 2v13a2 2 0 0 0 2 2h16M7 24h12M10 19v5M16 19v5"/><rect x="19" y="2" width="6" height="9" rx="1"/><path d="M22 11v13M19 5h6"/></svg></button>
    <button aria-label="Volume"><svg width="26" height="26" viewBox="0 0 26 26" fill="none" stroke="#222" stroke-width="1.600"><path d="M1 10v6h4l6 5V5L5 10zM14 9c2 2 2 6 0 8M17 6c4 4 4 10 0 14M20 3c6 6 6 14 0 20"/></svg></button>
    <button class="clock"><span>9:50 AM</span><span>5/12/2025</span></button>
  </div>
</footer>
</body>
</html>
```
FILE: styles.css
```css
* {
  box-sizing: border-box;
}

body {
  margin: 0;
  height: 100vh;
  display: flex;
  flex-direction: column;
  overflow: hidden;
  font: 24px/36px Inter, "Liberation Sans", sans-serif;
  color: #333;
}

h1, h2, h3, p, ul {
  margin: 0;
  padding: 0;
}

ul {
  list-style: none;
}

button {
  border: 0;
  padding: 0;
  background: none;
  font: inherit;
  color: inherit;
}

svg {
  display: block;
  flex: none;
}

.sprite {
  position: absolute;
  width: 0;
  height: 0;
}

/* Browser frame */
.browser,
.taskbar {
  font: 17px/24px "Open Sans", "Noto Sans", sans-serif;
  color: #444746;
}

.browser {
  background: #d3e2fd;
  border-bottom: 2px solid #dde0e4;
}

.tabstrip {
  height: 60px;
  display: flex;
  align-items: center;
}

.tab-search {
  width: 42px;
  height: 42px;
  margin: 0 8px 0 9px;
  border-radius: 14px;
  background: #ebf1fe;
  display: grid;
  place-items: center;
}

.tabs {
  flex: 1;
  min-width: 0;
  max-width: 3448px;
  align-self: stretch;
  display: flex;
}

.tab {
  position: relative;
  flex: 1 1 0;
  min-width: 0;
  display: flex;
  align-items: center;
  padding: 0 21px 0 17px;
}

.tab::before {
  content: "";
  position: absolute;
  left: 0;
  top: 18px;
  width: 2px;
  height: 24px;
  background: #a8c7fa;
}

.tab.plain::before {
  display: none;
}

.tab.active {
  margin: 9px 5px 0 2px;
  padding: 0 16px 9px 15px;
  border-radius: 15px 15px 0 0;
  background: #fff;
  color: #1f1f1f;
}

.tab.active::before,
.tab.active::after {
  content: "";
  position: absolute;
  display: block;
  top: auto;
  bottom: 0;
  width: 15px;
  height: 15px;
  background: radial-gradient(circle at 0 0, transparent 15px, #fff 15px);
}

.tab.active::before {
  left: -15px;
}

.tab.active::after {
  right: -15px;
  background: radial-gradient(circle at 100% 0, transparent 15px, #fff 15px);
}

.fav {
  width: 24px;
  height: 24px;
}

.tab-title {
  flex: 1;
  min-width: 0;
  margin: 0 18px 0 10px;
  padding-top: 2px;
  overflow: hidden;
  white-space: nowrap;
  mask-image: linear-gradient(90deg, #000 76%, transparent);
}

.x svg {
  width: 14px;
  height: 14px;
}

.new-tab {
  margin-left: 17px;
}

.window-controls {
  margin-left: auto;
  padding-right: 27px;
  display: flex;
  gap: 52px;
}

.toolbar {
  height: 69px;
  padding: 0 22px 0 23px;
  background: #fff;
  border-radius: 15px 15px 0 0;
  display: flex;
  align-items: center;
}

.tool {
  width: 20px;
  margin-right: 34px;
}

.omnibox {
  flex: 1;
  height: 51px;
  margin: 0 28px 0 -5px;
  padding: 0 23px 0 8px;
  border-radius: 26px;
  background: #edf1fa;
  display: flex;
  align-items: center;
  gap: 12px;
}

.site-info {
  width: 36px;
  height: 36px;
  border-radius: 50%;
  background: #fff;
  display: grid;
  place-items: center;
}

.url {
  flex: 1;
  min-width: 0;
  border: 0;
  padding: 0;
  background: none;
  font: 20px/30px "Open Sans", "Noto Sans", sans-serif;
  color: #1f1f1f;
}

.extensions {
  display: flex;
  gap: 30px;
}

.divider {
  width: 2px;
  height: 24px;
  background: #d3e3fd;
}

.toolbar .divider {
  margin: 0 26px 0 25px;
}

.profile {
  margin-right: 26px;
}

.bookmarks {
  height: 51px;
  padding: 0 22px 9px 28px;
  background: #fff;
  display: flex;
  align-items: center;
}

.bookmarks .divider {
  margin: 0 20px 0 23px;
}

.bookmarks a {
  display: flex;
  align-items: center;
  gap: 9px;
  margin-right: 28px;
  color: inherit;
  text-decoration: none;
}

.bookmarks a:last-child {
  margin-right: 0;
}

.bookmarks a svg {
  width: 24px;
  height: 24px;
}

.spacer {
  flex: 1;
}

/* Page */
.viewport {
  flex: 1;
  min-height: 0;
  display: flex;
  background: #f5f5f5;
}

.page {
  flex: 1;
  min-width: 0;
  display: flex;
  flex-direction: column;
}

.app-header {
  z-index: 2;
  padding: 9px 30px;
  background: #4a6cf7;
  box-shadow: 0 3px 15px rgba(0, 0, 0, .1);
  color: #fff;
  display: flex;
  align-items: center;
}

.brand {
  color: inherit;
  text-decoration: none;
}

.fa {
  display: inline-block;
  width: 24px;
  height: 24px;
  vertical-align: -3px;
  fill: currentColor;
}

.fa.wide {
  width: 27px;
}

.fa.narrow {
  width: 21px;
}

.header-tools > div {
  height: 36px;
}

.search {
  width: 249px;
  height: 29px;
  padding: 2px;
  border: 1px solid #767676;
  background: #fff;
  font: 20px "Liberation Sans", sans-serif;
  vertical-align: 0;
}

.search::placeholder {
  color: #757575;
}

.app-body {
  flex: 1;
  min-height: 0;
  display: flex;
}

.sidebar {
  flex: none;
  width: 397px;
  padding: 30px;
  overflow: hidden;
  background: #343a40;
  color: #f8f9fa;
}

.sidebar h3 {
  margin-bottom: 30px;
  padding-bottom: 15px;
  border-bottom: 1px solid #484e53;
  font-size: 29px;
  line-height: 43px;
}

.sidebar li {
  margin-bottom: 15px;
}

.sidebar li a {
  display: block;
  padding: 12px 15px;
  border-radius: 12px;
  color: inherit;
  text-decoration: none;
}

.sidebar .current {
  background: #4a6cf7;
}

.scrollbar {
  flex: none;
  width: 23px;
  padding: 6px 0;
  background: #fcfcfc;
  display: flex;
  flex-direction: column;
  align-items: center;
}

.scrollbar svg {
  width: 16px;
  height: 12px;
}

.scrollbar .down {
  transform: rotate(180deg);
}

.track {
  flex: 1;
  padding: 9px 0;
}

.thumb {
  width: 13px;
  border-radius: 7px;
  background: #8b8b8b;
}

.thumb.side {
  height: 584px;
}

.thumb.main {
  height: 184px;
}

.content {
  flex: 1;
  min-width: 0;
  padding: 30px;
  overflow: hidden;
}

h1 {
  font-size: 48px;
  line-height: 72px;
  font-weight: 700;
}

h2 {
  font-size: 36px;
  line-height: 54px;
  font-weight: 700;
}

.stats {
  display: grid;
  grid-template-columns: repeat(auto-fill, minmax(375px, 1fr));
  gap: 30px;
  margin-bottom: 30px;
}

.stat,
.module {
  border-radius: 12px;
  background: #fff;
  box-shadow: 0 3px 8px rgba(0, 0, 0, .1);
}

.stat {
  padding: 30px;
}

.stat h3 {
  margin-bottom: 15px;
  font-size: 24px;
  font-weight: 700;
  color: #6c757d;
}

.value {
  margin-bottom: 7px;
  font-size: 48px;
  line-height: 72px;
  font-weight: 600;
}

.value + .fa {
  display: block;
  margin-top: 12px;
}

.trend {
  font-size: 19px;
  line-height: 30px;
  color: #28a745;
}

.trend + .fa {
  display: block;
  margin: 5px 0 6px;
}

.module {
  overflow: hidden;
}

.module.raised {
  position: relative;
  transform: translateY(-8px);
  box-shadow: 0 8px 22px rgba(0, 0, 0, .1);
}

.module h3 {
  padding: 23px;
  background: #4a6cf7;
  color: #fff;
  font-size: 26px;
  line-height: 39px;
}

.module-body {
  padding: 23px 23px 22px;
}

.module-body p {
  height: 36px;
  margin-bottom: 15px;
}

.badge {
  display: inline-flex;
  align-items: center;
  gap: 9px;
  height: 27px;
  padding: 0 11px 0 13px;
  border-radius: 14px;
  background: #28a745;
  color: #fff;
  font-size: 18px;
  line-height: 27px;
  font-weight: 700;
  vertical-align: -1px;
}

.badge svg {
  width: 18px;
  height: 18px;
}

.module footer {
  padding: 22px 23px 23px;
  border-top: 1px solid #dee2e6;
  background: #f7f7f7;
  display: flex;
  align-items: center;
  justify-content: space-between;
}

.btn {
  padding: 6px 13px;
  border-radius: 12px;
  background: #4a6cf7;
  color: #fff;
  font-size: 19px;
  line-height: 30px;
}

/* Taskbar */
.taskbar {
  height: 72px;
  border-top: 2px solid #b9b9be;
  background: linear-gradient(90deg, #eadfe3, #e8e6dd 7%, #e6e6e4 12%, #e0e6f2 18%, #e4e4ea 28%, #e9dfdd 33%, #e3dfe6 37%, #ead8cc 41%, #e3e4ee 48%, #e1e6f2 58%, #e5e1ea 66%, #e0e4f1 80%, #e1e5f2 96%, #e6e1e9);
  color: #1b1b1b;
  display: grid;
  grid-template-columns: 1fr auto 1fr;
  align-items: center;
}

.weather {
  display: flex;
  align-items: center;
  gap: 14px;
  padding-left: 29px;
  text-align: left;
}

.weather-text span,
.clock span {
  display: block;
}

.muted {
  color: #5f5f61;
}

.task-icon {
  position: relative;
  display: block;
}

.count {
  position: absolute;
  top: -12px;
  right: -12px;
  min-width: 31px;
  height: 31px;
  border-radius: 16px;
  background: #0078d4;
  color: #fff;
  font-size: 17px;
  line-height: 30px;
  text-align: center;
}

.count.alert {
  top: -8px;
  right: -7px;
  min-width: 24px;
  height: 24px;
  line-height: 24px;
  background: #c42b1c;
}

.task-apps {
  display: flex;
  align-items: center;
}

.app {
  position: relative;
  width: 66px;
  height: 70px;
  display: grid;
  place-items: center;
}

.app.focused::before {
  content: "";
  position: absolute;
  inset: 6px 5px 7px;
  border-radius: 6px;
  background: #f3f5fb;
  box-shadow: 0 0 2px #b9bcc6;
}

.running::after {
  content: "";
  position: absolute;
  left: 29px;
  bottom: 7px;
  width: 9px;
  height: 5px;
  border-radius: 3px;
  background: #86888c;
}

.focused::after {
  left: 21px;
  width: 24px;
  background: #0078d4;
}

.overlay {
  position: absolute;
  top: -7px;
  right: -8px;
}

.task-search {
  width: 328px;
  height: 48px;
  margin: 0 3px 0 6px;
  padding: 0 13px;
  border: 2px solid #cbc6ca;
  border-radius: 24px;
  background: #f8f5f4;
  display: flex;
  align-items: center;
  gap: 15px;
}

.task-search input {
  flex: 1;
  min-width: 0;
  border: 0;
  padding: 0;
  background: none;
  font: 19px/24px "Open Sans", "Noto Sans", sans-serif;
}

.task-search input::placeholder {
  color: #5f5f61;
}

.tray {
  display: flex;
  align-items: center;
  justify-content: flex-end;
  padding-right: 29px;
}

.chevron {
  margin-right: 27px;
}

.network {
  margin-right: 10px;
}

.clock {
  margin-left: 26px;
  text-align: right;
}
```
